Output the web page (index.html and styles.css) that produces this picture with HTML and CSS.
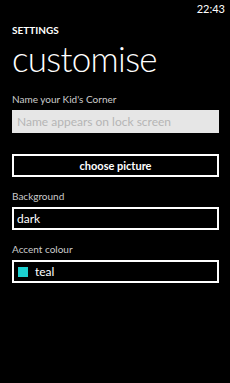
FILE: index.html
```html
<!DOCTYPE html>
<html lang="en">
<head>
    <meta charset="UTF-8">
    <meta name="viewport" content="width=device-width, initial-scale=1.0">
    <title>Settings - customise</title>
    <link rel="stylesheet" href="styles.css">
</head>
<body>
    <div class="status-bar">
        <span class="status-time">22:43</span>
    </div>

    <div class="page">
        <div class="app-title">SETTINGS</div>
        <div class="page-title">customise</div>

        <!-- Name -->
        <div class="field-label">Name your Kid's Corner</div>
        <div class="text-box">
            <span class="placeholder">Name appears on lock screen</span>
        </div>

        <div class="button">choose picture</div>

        <!-- Background -->
        <div class="field-label">Background</div>
        <div class="picker">dark</div>

        <!-- Accent -->
        <div class="field-label">Accent colour</div>
        <div class="picker">
            <span class="swatch"></span>teal
        </div>
    </div>
</body>
</html>
```

FILE: styles.css
```css
body {
    margin: 0;
    background-color: #000;
    color: #fff;
    font-family: Lato, "Open Sans", sans-serif;
    width: 230px;
    height: 383px;
    overflow: hidden;
}

.status-bar {
    height: 16px;
    display: flex;
    justify-content: flex-end;
    align-items: center;
    padding-right: 5px;
}

.status-time {
    font-size: 11px;
}

.page {
    padding: 0 11px 0 12px;
}

.app-title {
    font-size: 10px;
    font-weight: 700;
    line-height: 12px;
    margin-top: 8px;
}

.page-title {
    font-size: 35px;
    font-weight: 300;
    line-height: 44px;
    letter-spacing: -0.7px;
}

.field-label {
    font-size: 10px;
    color: #ccc;
    line-height: 14px;
    margin-top: 12px;
}

.text-box {
    margin-top: 4px;
    height: 23px;
    background-color: #e6e6e6;
    display: flex;
    align-items: center;
    padding-left: 5px;
}

.placeholder {
    color: #b5b5b5;
    font-size: 12px;
}

.button {
    margin-top: 21px;
    height: 19px;
    border: 2px solid #fff;
    display: flex;
    align-items: center;
    justify-content: center;
    font-size: 11px;
    font-weight: 700;
}

.picker {
    margin-top: 4px;
    height: 19px;
    border: 2px solid #fff;
    display: flex;
    align-items: center;
    padding-left: 3px;
    font-size: 12px;
}

.swatch {
    width: 10px;
    height: 10px;
    background-color: #1cd0d0;
    margin-right: 7px;
    margin-left: 1px;
}
```
